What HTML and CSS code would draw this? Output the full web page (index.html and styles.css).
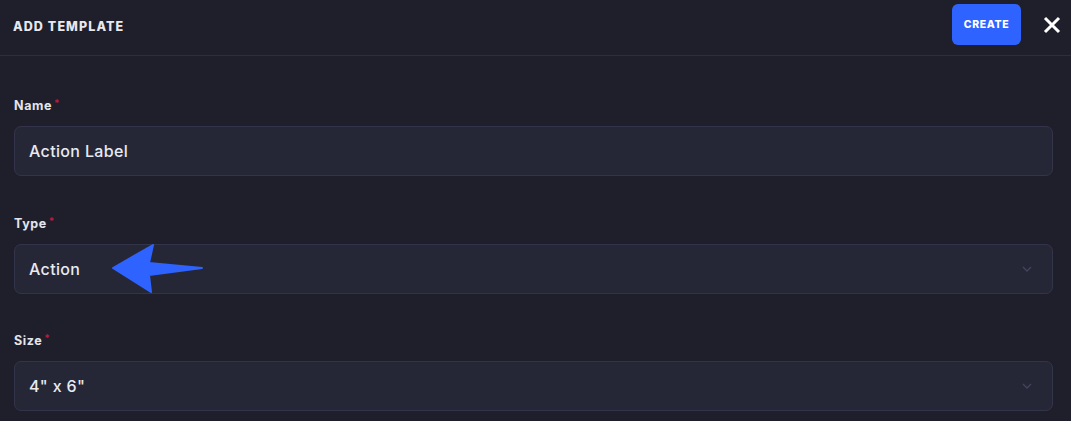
FILE: index.html
```html
<!DOCTYPE html>
<html>
<head>
<meta charset="utf-8">
<link rel="stylesheet" href="styles.css">
</head>
<body>
<div class="modal">
  <header class="head">
    <h1 class="title">ADD TEMPLATE</h1>
    <div class="actions">
      <button class="create">CREATE</button>
      <button class="close" aria-label="close">
        <svg width="18" height="18" viewBox="0 0 18 18"><path d="M2 2 L16 16 M16 2 L2 16" stroke="#fff" stroke-width="3" stroke-linecap="butt"/></svg>
      </button>
    </div>
  </header>
  <div class="body">
    <div class="field">
      <label class="label">Name<span class="req">*</span></label>
      <div class="input">Action Label</div>
    </div>
    <div class="field">
      <label class="label">Type<span class="req">*</span></label>
      <div class="input select">
        <span>Action</span>
        <svg class="arrow" width="100" height="52" viewBox="0 0 100 52"><path d="M4 24 L44 1 L40 19 L93 24 L40 31 L42 48 Z" fill="#2f63ff" stroke="#2f63ff" stroke-width="2" stroke-linejoin="round"/></svg>
        <svg class="chev" width="10" height="6" viewBox="0 0 10 6"><path d="M1 1 L5 5 L9 1" fill="none" stroke="#44455a" stroke-width="1.3"/></svg>
      </div>
    </div>
    <div class="field">
      <label class="label">Size<span class="req">*</span></label>
      <div class="input select">
        <span>4" x 6"</span>
        <svg class="chev" width="10" height="6" viewBox="0 0 10 6"><path d="M1 1 L5 5 L9 1" fill="none" stroke="#44455a" stroke-width="1.3"/></svg>
      </div>
    </div>
  </div>
</div>
</body>
</html>
```
FILE: styles.css
```css
html, body {
  margin: 0;
  padding: 0;
  background: #1f1f2c;
  font-family: "Inter", "Noto Sans", sans-serif;
  color: #eceef3;
}
.modal {
  width: 1071px;
  height: 421px;
  overflow: hidden;
}
.head {
  height: 56px;
  border-bottom: 1px solid #2d2d3d;
  display: flex;
  align-items: center;
  justify-content: space-between;
  padding: 0 10px 0 13px;
  box-sizing: border-box;
}
.title {
  margin: 0;
  font-size: 12.5px;
  font-weight: 800;
  letter-spacing: 1.1px;
  color: #e8e9ef;
  margin-top: -2px;
}
.actions {
  display: flex;
  align-items: center;
  gap: 22px;
  margin-top: -6px;
}
.create {
  background: #2f63ff;
  color: #fff;
  border: none;
  border-radius: 6px;
  width: 69px;
  height: 41px;
  font-family: inherit;
  font-size: 10.5px;
  font-weight: 800;
  letter-spacing: 0.6px;
  padding: 0;
}
.close {
  background: none;
  border: none;
  padding: 0;
  width: 18px;
  height: 18px;
  display: flex;
}
.body {
  padding: 43px 18px 0 14px;
  display: flex;
  flex-direction: column;
  gap: 40.5px;
}
.field {
  display: flex;
  flex-direction: column;
  gap: 14px;
}
.label {
  display: block;
  height: 13px;
  font-size: 12.5px;
  font-weight: 700;
  letter-spacing: 0.6px;
  color: #e4e5ec;
  line-height: 13px;
}
.req {
  color: #c2183a;
  margin-left: 2px;
  font-size: 10px;
  vertical-align: 3px;
  line-height: 0;
}
.input {
  height: 50px;
  box-sizing: border-box;
  background: #262736;
  border: 1px solid #33344a;
  border-radius: 7px;
  padding: 0 14px;
  display: flex;
  align-items: center;
  font-size: 16px;
  font-weight: 500;
  letter-spacing: 0.35px;
  color: #e9eaf0;
  position: relative;
}
.select {
  justify-content: space-between;
}
.chev {
  margin-right: 6px;
}
.arrow {
  position: absolute;
  left: 94px;
  top: -1px;
}
```
